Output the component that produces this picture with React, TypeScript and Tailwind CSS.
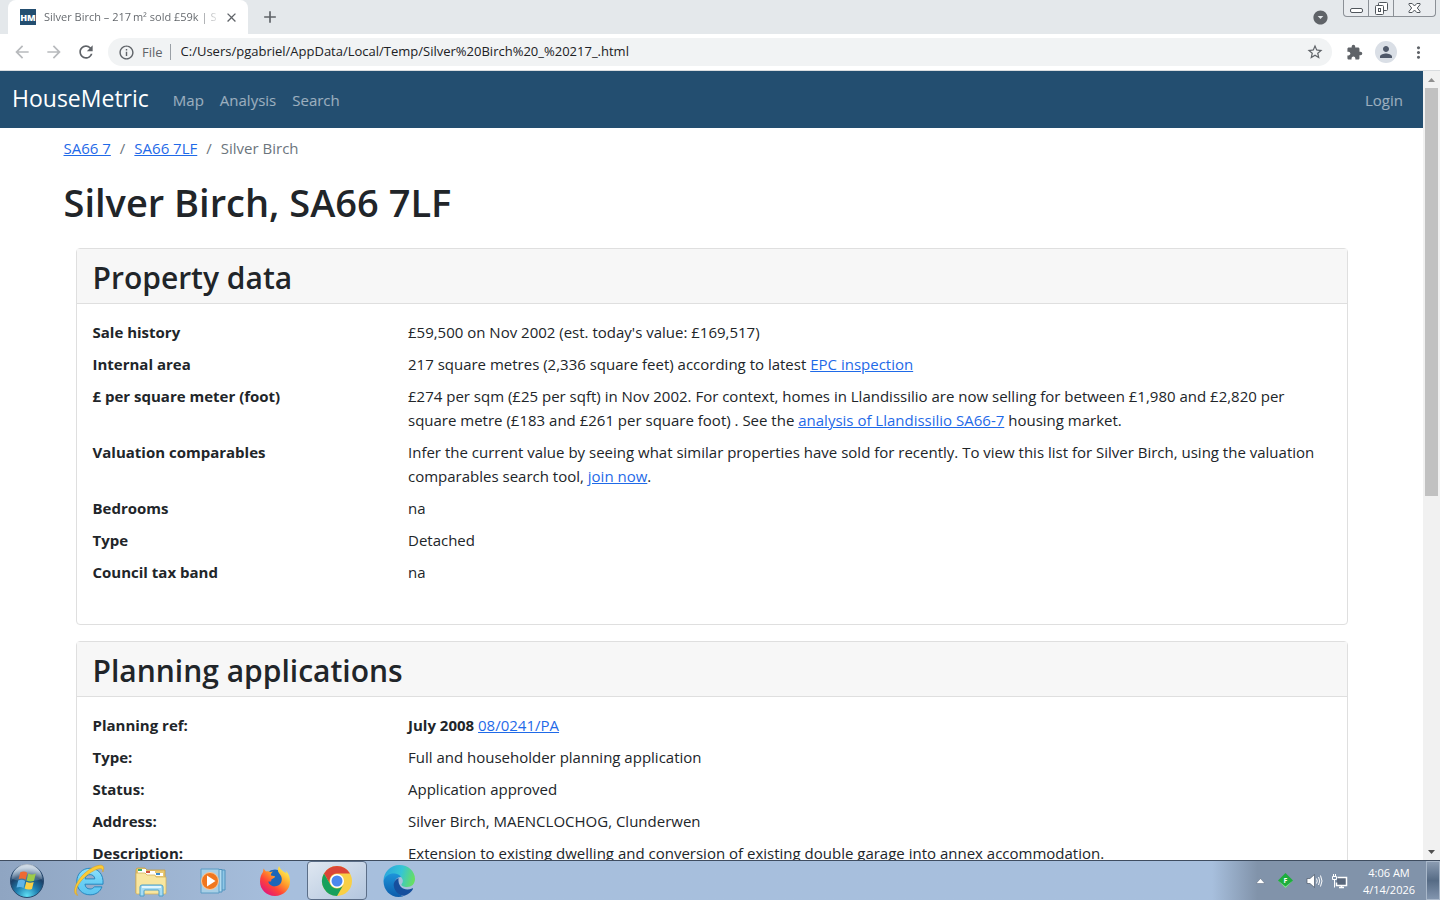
import type { ReactNode } from 'react'
import {
  MdAdd,
  MdArrowBack,
  MdArrowDropDownCircle,
  MdArrowForward,
  MdClose,
  MdExtension,
  MdInfoOutline,
  MdMoreVert,
  MdPerson,
  MdRefresh,
  MdStarBorder
} from 'react-icons/md'

interface Row {
  label: string
  value: ReactNode
}

const Link = ({ children }: { children: ReactNode }) => (
  <a href="#" className="text-[#1f6ae8] underline">{children}</a>
)

const propertyRows: Row[] = [
  { label: 'Sale history', value: "£59,500 on Nov 2002 (est. today's value: £169,517)" },
  {
    label: 'Internal area',
    value: <>217 square metres (2,336 square feet) according to latest <Link>EPC inspection</Link></>
  },
  {
    label: '£ per square meter (foot)',
    value: (
      <>
        £274 per sqm (£25 per sqft) in Nov 2002. For context, homes in Llandissilio are now selling for between £1,980 and £2,820 per
        square metre (£183 and £261 per square foot) . See the <Link>analysis of Llandissilio SA66-7</Link> housing market.
      </>
    )
  },
  {
    label: 'Valuation comparables',
    value: (
      <>
        Infer the current value by seeing what similar properties have sold for recently. To view this list for Silver Birch, using the valuation
        comparables search tool, <Link>join now</Link>.
      </>
    )
  },
  { label: 'Bedrooms', value: 'na' },
  { label: 'Type', value: 'Detached' },
  { label: 'Council tax band', value: 'na' }
]

const planningRows: Row[] = [
  { label: 'Planning ref:', value: <><strong className="font-bold">July 2008</strong> <Link>08/0241/PA</Link></> },
  { label: 'Type:', value: 'Full and householder planning application' },
  { label: 'Status:', value: 'Application approved' },
  { label: 'Address:', value: 'Silver Birch, MAENCLOCHOG, Clunderwen' },
  {
    label: 'Description:',
    value: 'Extension to existing dwelling and conversion of existing double garage into annex accommodation.'
  }
]

function Card({ title, rows }: { title: string; rows: Row[] }) {
  return (
    <section className="mx-3 mb-4 rounded border border-[#dfdfdf] bg-white">
      <h2 className="border-b border-[#dfdfdf] bg-[#f7f7f7] px-4 pt-2.5 pb-1.5 text-[30px] leading-[38px] font-semibold">{title}</h2>
      <dl className="p-4 pb-8">
        {rows.map((row) => (
          <div key={row.label} className="mb-2 grid grid-cols-4">
            <dt className="pr-6 font-bold">{row.label}</dt>
            <dd className="col-span-3 pl-1.5">{row.value}</dd>
          </div>
        ))}
      </dl>
    </section>
  )
}

function WindowControls() {
  return (
    <div className="flex h-[17px] items-stretch self-start rounded-b border border-t-0 border-[#8b9096] bg-[#e9ecef] text-[#50565c]">
      <button aria-label="Minimize" className="flex w-[25px] items-center justify-center border-r border-[#8b9096]">
        <svg width="13" height="16" viewBox="0 0 13 16" fill="#fff" stroke="currentColor">
          <rect x="0.5" y="8.5" width="12" height="4" rx="1.5" />
        </svg>
      </button>
      <button aria-label="Restore" className="flex w-[25px] items-center justify-center border-r border-[#8b9096]">
        <svg width="14" height="16" viewBox="0 0 14 16" fill="#fff" stroke="currentColor">
          <rect x="4.5" y="2.5" width="9" height="8" rx="1" />
          <rect x="1.5" y="5.5" width="8" height="9" rx="1" />
          <rect x="4.5" y="8.5" width="2" height="3" />
        </svg>
      </button>
      <button aria-label="Close window" className="flex w-[41px] items-center justify-center">
        <svg width="13" height="16" viewBox="0 0 13 16" fill="#fff" stroke="currentColor">
          <path d="M1 3.500h3.200L6.500 6l2.300-2.500H12v1.200L9.300 8l2.700 3.300v1.200H8.800L6.500 10l-2.300 2.500H1v-1.200L3.700 8 1 4.700z" />
        </svg>
      </button>
    </div>
  )
}

function BrowserChrome() {
  return (
    <header className="shrink-0 text-[#5f6368]">
      {/* Tab strip */}
      <div className="flex h-[34px] items-center bg-[#e4e8eb] pl-2 pr-1">
        <div className="flex h-full w-60 items-center rounded-t-lg bg-white pl-3 pr-2">
          <span className="flex size-4 shrink-0 items-center justify-center bg-[#234e70] text-[9px] leading-none font-extrabold text-white">
            HM
          </span>
          <span className="ml-2 w-[178px] bg-linear-to-r from-[#5f6368] from-85% to-transparent bg-clip-text text-[11px] whitespace-nowrap text-transparent">
            Silver Birch – 217&#8201;m² sold £59k | S
          </span>
          <button aria-label="Close tab" className="ml-0.5 shrink-0"><MdClose size={15} /></button>
        </div>
        <button aria-label="New tab" className="ml-3"><MdAdd size={20} /></button>
        <button aria-label="Search tabs" className="ml-auto mr-3.5"><MdArrowDropDownCircle size={17} /></button>
        <WindowControls />
      </div>

      {/* Toolbar */}
      <div className="flex h-[37px] items-center border-b border-[#d9dcdf] bg-white pl-3 pr-3">
        <button aria-label="Back" className="text-[#b8babd]"><MdArrowBack size={20} /></button>
        <button aria-label="Forward" className="ml-3 text-[#b8babd]"><MdArrowForward size={20} /></button>
        <button aria-label="Reload" className="ml-3"><MdRefresh size={20} /></button>
        <div className="ml-3 flex h-7 min-w-0 flex-1 items-center rounded-full bg-[#f1f3f4] pl-2.5 pr-2">
          <MdInfoOutline size={17} className="shrink-0" />
          <span className="ml-[7px] mr-2.5 border-r border-[#9aa0a6] pr-[7px] text-[13px] leading-4">File</span>
          <input
            aria-label="Address"
            className="min-w-0 flex-1 bg-transparent text-[13px] text-[#202124] outline-none"
            defaultValue="C:/Users/pgabriel/AppData/Local/Temp/Silver%20Birch%20_%20217_.html"
          />
          <button aria-label="Bookmark"><MdStarBorder size={18} /></button>
        </div>
        <button aria-label="Extensions" className="ml-3.5"><MdExtension size={17} /></button>
        <button aria-label="Profile" className="ml-3 flex size-[22px] items-center justify-center rounded-full bg-[#dadfe6] text-[#50596a]">
          <MdPerson size={18} />
        </button>
        <button aria-label="Menu" className="ml-3"><MdMoreVert size={19} /></button>
      </div>
    </header>
  )
}

function ScrollBar() {
  return (
    <div className="flex w-[17px] shrink-0 flex-col bg-[#f1f1f1]">
      <button aria-label="Scroll up" className="flex h-[17px] items-center justify-center">
        <svg width="7" height="4" viewBox="0 0 7 4"><path d="M0 4 3.500 0 7 4z" fill="#8f8f8f" /></svg>
      </button>
      <div className="flex-1 px-0.5">
        <div className="h-[54%] bg-[#c1c1c1]" />
      </div>
      <button aria-label="Scroll down" className="flex h-[17px] items-center justify-center">
        <svg width="7" height="4" viewBox="0 0 7 4"><path d="M0 0h7L3.500 4z" fill="#505050" /></svg>
      </button>
    </div>
  )
}

function StartOrb() {
  return (
    <svg width="36" height="36" viewBox="0 0 36 36">
      <defs>
        <radialGradient id="orb" cx="50%" cy="95%" r="85%">
          <stop offset="0" stopColor="#5fe0f5" />
          <stop offset="0.4" stopColor="#1f7fb0" />
          <stop offset="0.75" stopColor="#1b4067" />
          <stop offset="1" stopColor="#7d9dbd" />
        </radialGradient>
        <linearGradient id="orbShine" x1="0" y1="0" x2="0" y2="1">
          <stop offset="0" stopColor="#fff" stopOpacity="0.7" />
          <stop offset="1" stopColor="#fff" stopOpacity="0.1" />
        </linearGradient>
      </defs>
      <circle cx="18" cy="18" r="16.500" fill="url(#orb)" stroke="#28486c" />
      <path d="M3 16a15 15 0 0 1 30 0c-9 3-21 3-30 0z" fill="url(#orbShine)" />
      <path d="M11.300 9.300c2.700-1.200 5-.9 7 .4l-1.700 7c-2.200-1.300-4.500-1.600-7-.5z" fill="#ee6a32" />
      <path d="M19.300 10.500c2.600 1.300 4.900 1.300 7.500 0l-1.800 7.200c-2.500 1.100-4.800 1-7.400-.2z" fill="#9ccb4a" />
      <path d="M9.200 17.500c2.600-1 4.800-.8 7 .5l-1.700 7c-2.200-1.200-4.500-1.400-7-.4z" fill="#5fb4e8" />
      <path d="M17.300 18.700c2.500 1.200 4.800 1.300 7.400.2l-1.700 7c-2.600 1.100-4.900.9-7.400-.3z" fill="#fbd045" />
    </svg>
  )
}

function ExplorerIcon() {
  return (
    <svg width="34" height="34" viewBox="0 0 32 32">
      <defs>
        <linearGradient id="ie" x1="0" y1="0" x2="0" y2="1">
          <stop offset="0" stopColor="#8fe0fa" />
          <stop offset="0.5" stopColor="#6bcff5" />
          <stop offset="1" stopColor="#5cc4f0" />
        </linearGradient>
      </defs>
      <path
        d="M17 4C9.500 4 4.500 9.500 4.500 16.500S9.500 29 17 29c5.500 0 9.700-3 11.200-7.500h-7.200c-.9 1.300-2.200 2-4 2-2.800 0-4.500-1.600-4.800-4.500h17C30 9.500 24.500 4 17 4zm-4.700 10C12.800 11.500 14.500 10 17 10s4.200 1.500 4.500 4z"
        fill="url(#ie)"
        stroke="#2484bd"
        strokeWidth="0.900"
      />
      <path
        d="M5.500 29.500C2 29 1.500 24.500 4 19 8.500 10 18 2.500 25.500 1.200c4-.7 5.500 1.800 3.500 6.300.2-3-1.800-3.900-5-2.700C16.500 7.500 8 15 5 21.500c-1.600 4-1.400 6.700.5 8z"
        fill="#fccb35"
        stroke="#d99c1d"
        strokeWidth="0.500"
      />
    </svg>
  )
}

function FolderIcon() {
  return (
    <svg width="34" height="32" viewBox="0 0 34 32">
      <path d="M2 5q0-2 2-2h7l2 2h18v23H2z" fill="#e9c973" stroke="#c7a044" strokeWidth="0.800" />
      <path d="M4 4h8v4H4zM12 6h9v4h-9zM21 8h8v3h-8z" fill="#fff" />
      <path d="M4 5h4" stroke="#36ad63" strokeWidth="2" />
      <path d="M12 7h4" stroke="#d4543f" strokeWidth="2" />
      <path d="M22 9h4" stroke="#3d8ccc" strokeWidth="2" />
      <path d="M2 8h9l2 2h8l1 2h10v16q0 1-1 1H3q-1 0-1-1z" fill="#f8e6a0" stroke="#d5b35b" strokeWidth="0.800" />
      <path d="M6 31v-9q0-2 2-2h19q2 0 2 2v9h-4v-5q0-1-1-1H11q-1 0-1 1v5z" fill="#a7dcf3" stroke="#4d9fc9" />
      <path d="M8 22h19" stroke="#e3f6fd" strokeWidth="2" />
    </svg>
  )
}

function PlayerIcon() {
  return (
    <svg width="28" height="28" viewBox="0 0 28 28">
      <path d="M9 3h17v20H9z" fill="#8fc7e6" stroke="#4f93bf" />
      <path d="M6 2.500h17V25H6z" fill="#b2dcf0" stroke="#4f93bf" />
      <path d="M2 2h18v24H2z" fill="#a8cfe6" stroke="#5b9cc5" />
      <circle cx="11" cy="14" r="8.500" fill="#f0771f" stroke="#fbc999" />
      <path d="M8 8.500 16.500 14 8 19.500z" fill="#fff" />
    </svg>
  )
}

function FirefoxIcon() {
  return (
    <svg width="32" height="32" viewBox="0 0 32 32">
      <defs>
        <linearGradient id="fox" x1="0.850" y1="0.100" x2="0.200" y2="0.900">
          <stop offset="0" stopColor="#fff44f" />
          <stop offset="0.400" stopColor="#ff9a2a" />
          <stop offset="0.700" stopColor="#ff4438" />
          <stop offset="1" stopColor="#e31a75" />
        </linearGradient>
      </defs>
      <circle cx="16" cy="15" r="10.500" fill="#1c66b8" />
      <path
        d="M20 1c1 3 3 4 5 6 1 .3 2 1 2.500 2-.1-1.500-.5-2.500-1-3.500 3 2.500 4.500 6.500 4.500 11 0 8-6.500 14.500-15 14.500S1 24.500 1 16.500C1 12 2.500 9 4 7l.5-3.500L7 6.500c1.500-.4 3-.3 4.500.5L14 6.500c-1.500 1.300-2.300 2.500-2 4l4 .7c0 1.300-1 2-3.500 3-.3 1.300-.2 2-.7 2.300-1-.1-2-.2-2.600.3 1 3.200 4 5 7 4.500 4.500-.4 7-3.500 6.500-8-.3-3-2.500-4.500-3.500-6.500-.6-2 0-4 .8-5.800z"
        fill="url(#fox)"
      />
    </svg>
  )
}

function ChromeIcon() {
  return (
    <svg width="32" height="32" viewBox="0 0 32 32">
      <circle cx="16" cy="16" r="15" fill="#f9cf45" />
      <path d="M3 8.500A15 15 0 0 1 29 8.500H16a7.500 7.500 0 0 0-6.500 11.250z" fill="#db4437" />
      <path d="M3 8.500 9.500 19.750A7.500 7.500 0 0 0 22.500 19.750L16 31A15 15 0 0 1 3 8.500z" fill="#17a05d" />
      <circle cx="16" cy="16" r="7" fill="#fff" />
      <circle cx="16" cy="16" r="5.500" fill="#4a87ee" />
    </svg>
  )
}

function EdgeIcon() {
  return (
    <svg width="34" height="34" viewBox="0 0 34 34">
      <defs>
        <linearGradient id="edgeTop" x1="0" y1="0.300" x2="1" y2="0.500">
          <stop offset="0" stopColor="#2aa4dd" />
          <stop offset="0.550" stopColor="#35c5d5" />
          <stop offset="1" stopColor="#67df62" />
        </linearGradient>
        <linearGradient id="edgeSide" x1="0" y1="0" x2="0" y2="1">
          <stop offset="0" stopColor="#1d94da" />
          <stop offset="1" stopColor="#0d5cab" />
        </linearGradient>
      </defs>
      <path d="M1.500 17C1.500 8 8.500 1 17.500 1 26 1 33 7 33 15c0 5-3.500 8-8 8-4 0-6-1.500-5.500-2.700 2-2 1.700-5-.3-7C14.500 9 5 9.500 1.500 17z" fill="url(#edgeTop)" />
      <path d="M1.500 17C3 11.500 8 9 13 9.500c3 .3 5 2 6 3.500-4 0-6.500 3-6.500 7 0 5 3.500 10.500 9 12.200C11 35.500 1.500 28 1.500 17z" fill="url(#edgeSide)" />
      <path d="M16.500 14c-3.500 1.500-5.500 5-4.500 9 1.500 6 6.500 9.500 11 8.500 4-1.300 6.500-4 8-6.500.3-.7-.3-1-1-.6-6 2.800-14.500.1-13.500-10.400z" fill="#164f9d" />
    </svg>
  )
}

const taskbarApps = [
  { name: 'Internet Explorer', icon: <ExplorerIcon /> },
  { name: 'Windows Explorer', icon: <FolderIcon /> },
  { name: 'Media Player', icon: <PlayerIcon /> },
  { name: 'Firefox', icon: <FirefoxIcon /> },
  { name: 'Chrome', icon: <ChromeIcon />, active: true },
  { name: 'Edge', icon: <EdgeIcon /> }
]

function Taskbar() {
  return (
    <footer className="flex h-10 shrink-0 items-stretch border-t border-[#3f4d60] bg-linear-to-r from-[#8fa5c2] to-[#a7bfdd] to-20%">
      <button aria-label="Start" className="flex w-[54px] items-center justify-center"><StartOrb /></button>
      <nav className="ml-[5px] flex gap-0.5">
        {taskbarApps.map((app) => (
          <button
            key={app.name}
            aria-label={app.name}
            className={`flex w-[60px] items-center justify-center ${
              app.active ? 'rounded-sm border border-[#5b6e88] bg-linear-to-br from-[#dfe7f1] to-[#b3c6de]' : ''
            }`}
          >
            {app.icon}
          </button>
        ))}
      </nav>
      <div className="ml-auto flex items-center bg-linear-to-r from-transparent to-[#8193aa] to-20% pl-11 text-white">
        <button aria-label="Show hidden icons">
          <svg width="9" height="6" viewBox="0 0 9 6"><path d="M0 5.500 4.500 0.500 9 5.500z" fill="#fff" stroke="#56657a" strokeWidth="0.500" /></svg>
        </button>
        <span className="relative ml-3 flex size-[17px] items-center justify-center">
          <svg className="absolute inset-0" width="17" height="17" viewBox="0 0 17 17">
            <path d="M8.500 1 16 8.500 8.500 16 1 8.500z" fill="#1eae3c" />
            <path d="m1 8.500 7.500 6 7.500-6-7.500 7.500z" fill="#8be39b" />
          </svg>
          <span className="relative text-[7px] leading-none font-bold">F</span>
        </span>
        <button aria-label="Volume" className="ml-3">
          <svg width="17" height="16" viewBox="0 0 17 16" fill="none" stroke="#fff">
            <path d="M1 5.500h3L8.500 1.500v13L4 10.500H1z" fill="#fff" stroke="#4c5868" strokeWidth="0.700" />
            <path d="M10.500 5.500q1.500 2.500 0 5M12.500 4q2.500 4 0 8M14.500 2.500q3 5.500 0 11" />
          </svg>
        </button>
        <button aria-label="Network" className="ml-2">
          <svg width="17" height="16" viewBox="0 0 17 16" fill="none" stroke="#fff">
            <path d="M6.500 4.500h9v8h-10V9.500" fill="#59677b" strokeWidth="1.500" />
            <path d="M8 14.500h5M10.500 12.500v2" strokeWidth="1.500" />
            <path d="M1.500 3.500h4v3h-4zM2.500 1v2.500M4.500 1v2.500M3.500 6.500v8" />
          </svg>
        </button>
        <div className="ml-3.5 w-[54px] text-center text-[11px] leading-[17px]">
          <p>4:06 AM</p>
          <p className="whitespace-nowrap">4/14/2026</p>
        </div>
        <button
          aria-label="Show desktop"
          className="ml-2.5 h-full w-[14px] border border-[#a9b8ca] bg-linear-to-b from-[#8b9cb2] via-[#566b85] to-[#8295ae]"
        />
      </div>
    </footer>
  )
}

export default function App() {
  return (
    <div className="flex h-screen flex-col overflow-hidden bg-white font-['Segoe_UI','Open_Sans',sans-serif]">
      <BrowserChrome />

      <div className="flex min-h-0 flex-1">
        <div className="min-w-0 flex-1 overflow-hidden text-[15px] leading-6 text-[#212529]">
          <nav className="flex h-[57px] items-center bg-[#234e70] px-3 text-white/55">
            <a href="#" className="mr-6 pb-1 text-[23px] text-white">HouseMetric</a>
            <div className="flex flex-1 gap-4">
              <a href="#">Map</a>
              <a href="#">Analysis</a>
              <a href="#">Search</a>
            </div>
            <a href="#" className="mr-2">Login</a>
          </nav>

          <main className="mx-auto max-w-[1320px] px-3 pt-2">
            <ol className="mb-4 flex gap-2 text-[#6c757d]">
              <li><Link>SA66 7</Link></li>
              <li className="px-px">/</li>
              <li><Link>SA66 7LF</Link></li>
              <li className="px-px">/</li>
              <li>Silver Birch</li>
            </ol>
            <h1 className="mb-5 text-[38px] leading-[52px] font-semibold">Silver Birch, SA66 7LF</h1>
            <Card title="Property data" rows={propertyRows} />
            <Card title="Planning applications" rows={planningRows} />
          </main>
        </div>
        <ScrollBar />
      </div>

      <Taskbar />
    </div>
  )
}
